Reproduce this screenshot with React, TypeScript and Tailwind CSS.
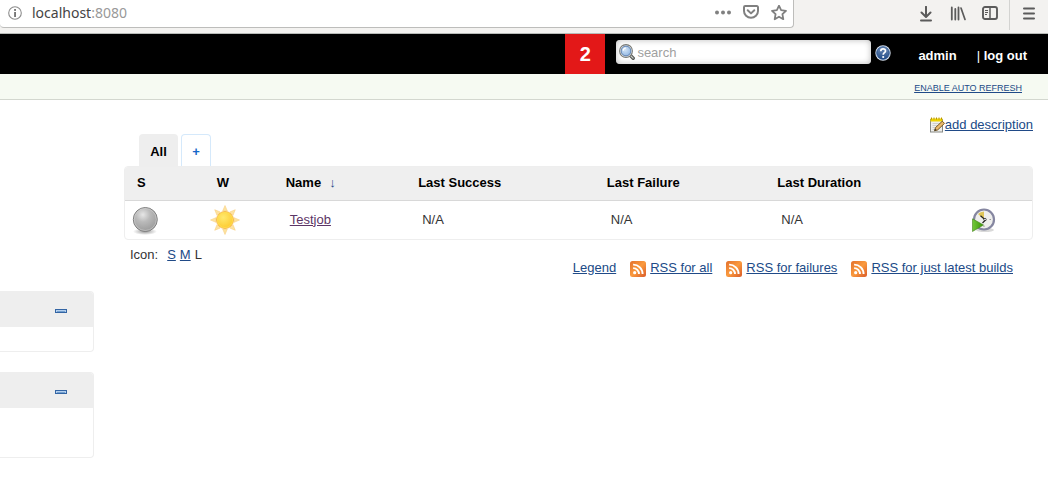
import type { ReactNode } from "react";

const link = "text-[#204a87] underline";

function InfoIcon() {
  return (
    <svg width="14" height="14" viewBox="0 0 14 14" aria-hidden="true">
      <circle cx="7" cy="7" r="6.3" fill="none" stroke="#8c8c8c" strokeWidth="1.1" />
      <rect x="6.1" y="3" width="1.9" height="1.9" fill="#777" />
      <rect x="6.1" y="6" width="1.9" height="5" fill="#777" />
    </svg>
  );
}

function DotsIcon() {
  return (
    <svg width="16" height="16" viewBox="0 0 16 16" fill="#808080" aria-hidden="true">
      <circle cx="2" cy="7.500" r="2" />
      <circle cx="8" cy="7.500" r="2" />
      <circle cx="14" cy="7.500" r="2" />
    </svg>
  );
}

function PocketIcon() {
  return (
    <svg width="16" height="16" viewBox="0 0 16 16" fill="none" stroke="#808080" strokeWidth="2" aria-hidden="true">
      <path d="M2.2 1h11.6a1.2 1.2 0 0 1 1.2 1.2V6a7 6.8 0 0 1-14 0V2.200A1.200 1.200 0 0 1 2.200 1z" />
      <path d="M4.700 5.200 8 8.400l3.300-3.200" strokeLinecap="round" strokeLinejoin="round" />
    </svg>
  );
}

function StarIcon() {
  return (
    <svg width="16" height="16" viewBox="0 0 16 16" fill="none" stroke="#808080" strokeWidth="1.800" strokeLinejoin="round" aria-hidden="true">
      <path d="M8 .7 10.100 5.200 15 5.800 11.400 9.200 12.300 14.200 8 11.700 3.700 14.200 4.600 9.200 1 5.800 5.900 5.200z" />
    </svg>
  );
}

function DownloadIcon() {
  return (
    <svg width="16" height="16" viewBox="0 0 16 16" fill="none" stroke="#5b5b5b" strokeWidth="2" strokeLinecap="round" strokeLinejoin="round" aria-hidden="true">
      <path d="M8 .8v10M3.500 6.500 8 11l4.500-4.500M3 14.500h10" />
    </svg>
  );
}

function LibraryIcon() {
  return (
    <svg width="16" height="16" viewBox="0 0 16 16" fill="none" stroke="#5b5b5b" strokeLinecap="round" aria-hidden="true">
      <path d="M1.800 1.500v12M5.300 3v10.500M8.500 1.500v12" strokeWidth="1.800" />
      <path d="M11 2 15 13.500" strokeWidth="1.700" />
    </svg>
  );
}

function SidebarIcon() {
  return (
    <svg width="16" height="16" viewBox="0 0 16 16" fill="none" stroke="#5b5b5b" aria-hidden="true">
      <rect x="1" y="1" width="14" height="12" rx="2" strokeWidth="1.900" />
      <path d="M8 1v12" strokeWidth="1.500" />
      <path d="M3 4.500h3M3 6.500h3M3 8.500h2" />
    </svg>
  );
}

function MenuIcon() {
  return (
    <svg width="16" height="16" viewBox="0 0 16 16" stroke="#5b5b5b" strokeWidth="2" strokeLinecap="round" aria-hidden="true">
      <path d="M3 2.500h10M3 7.500h10M3 12.500h10" />
    </svg>
  );
}

function MagnifierIcon() {
  return (
    <svg width="16" height="16" viewBox="0 0 16 16" aria-hidden="true">
      <defs>
        <radialGradient id="lens" cx=".4" cy=".35" r=".7">
          <stop offset="0" stopColor="#d5e6f7" />
          <stop offset="1" stopColor="#8fb5e2" />
        </radialGradient>
      </defs>
      <path d="m11 11 3.200 3.200" stroke="#555753" strokeWidth="3.400" strokeLinecap="round" />
      <path d="m11.500 11.500 2.600 2.600" stroke="#c9cbc7" strokeWidth="1.200" strokeLinecap="round" />
      <circle cx="7" cy="7" r="6.400" fill="#f4f4f4" stroke="#777975" strokeWidth="1.100" />
      <circle cx="7" cy="7" r="4.900" fill="url(#lens)" stroke="#5c7fae" />
      <path d="M4.200 6.600A3 3 0 0 1 7 4" stroke="#fff" strokeWidth="1.200" fill="none" />
    </svg>
  );
}

function HelpIcon() {
  return (
    <svg width="16" height="16" viewBox="0 0 16 16" aria-hidden="true">
      <defs>
        <linearGradient id="help" x2="0" y2="1">
          <stop offset="0" stopColor="#7390b8" />
          <stop offset="1" stopColor="#204a87" />
        </linearGradient>
      </defs>
      <circle cx="8" cy="8" r="7.700" fill="#d5e0ee" />
      <circle cx="8" cy="8" r="6.300" fill="url(#help)" stroke="#204a87" strokeWidth=".8" />
      <path d="M5.800 6.200c0-3 4.700-3 4.700-.2C10.500 7.700 8.200 7.700 8.200 9.800" fill="none" stroke="#fff" strokeWidth="1.700" />
      <circle cx="8.200" cy="12" r="1.100" fill="#fff" />
    </svg>
  );
}

function NotepadIcon() {
  return (
    <svg width="15" height="16" viewBox="0 0 15 16" aria-hidden="true">
      <rect x=".5" y="2.500" width="12" height="12.500" fill="#eeeeec" stroke="#888a85" />
      <path d="M2.500 6.500h8M2.500 8.500h7M2.500 10.500h5M2.500 12.500h4" stroke="#cfd0cc" />
      <rect x=".5" y="1.500" width="12" height="3" fill="#edd400" />
      <path d="M1.500 .5v2M4 .5v2M6.500.5v2M9 .5v2M11.500.5v2" stroke="#b89200" />
      <path d="m4.500 13.800 1-3.200 6.800-6.400 2.200 2.200-6.800 6.500z" fill="#e9b96e" stroke="#6b4a13" strokeWidth=".9" />
      <path d="m4.500 13.800.6-2 1.500 1.300z" fill="#2e3436" />
    </svg>
  );
}

function BallIcon() {
  return (
    <svg width="32" height="32" viewBox="0 0 32 32" role="img" aria-label="Not built">
      <defs>
        <radialGradient id="ball" cx=".4" cy=".3" r=".75">
          <stop offset="0" stopColor="#e6e6e6" />
          <stop offset=".4" stopColor="#bababa" />
          <stop offset="1" stopColor="#989898" />
        </radialGradient>
        <radialGradient id="shade">
          <stop offset="0" stopColor="#000" stopOpacity=".4" />
          <stop offset="1" stopColor="#000" stopOpacity="0" />
        </radialGradient>
      </defs>
      <ellipse cx="16" cy="27.500" rx="12" ry="3.500" fill="url(#shade)" />
      <circle cx="16.300" cy="15.500" r="12" fill="url(#ball)" stroke="#808080" />
      <circle cx="16.300" cy="15.500" r="11" fill="none" stroke="#d0d0d0" strokeOpacity=".6" />
    </svg>
  );
}

const rayAngles = [0, 45, 90, 135, 180, 225, 270, 315];

function SunIcon() {
  return (
    <svg width="32" height="32" viewBox="0 0 32 32" role="img" aria-label="Sunny">
      <defs>
        <radialGradient id="sun" cx=".4" cy=".35" r=".7">
          <stop offset="0" stopColor="#ffe96e" />
          <stop offset="1" stopColor="#fdc92b" />
        </radialGradient>
      </defs>
      {rayAngles.map((angle) => (
        <path key={angle} d="M16 1.500 18.300 7h-4.600z" fill="#fde3a0" stroke="#f8d083" strokeWidth=".6" transform={`rotate(${angle} 16 16)`} />
      ))}
      <circle cx="16" cy="16" r="8.500" fill="url(#sun)" stroke="#f5b548" strokeWidth=".9" />
      <circle cx="16" cy="16" r="7.600" fill="none" stroke="#ffdf55" strokeWidth=".7" />
    </svg>
  );
}

function ScheduleIcon() {
  return (
    <svg width="24" height="24" viewBox="0 0 24 24" aria-hidden="true">
      <defs>
        <linearGradient id="play" x2="1">
          <stop offset="0" stopColor="#73c93a" />
          <stop offset="1" stopColor="#3a9408" />
        </linearGradient>
      </defs>
      <ellipse cx="13" cy="22" rx="9" ry="2" fill="#000" fillOpacity=".15" />
      <circle cx="12" cy="11.500" r="10" fill="#eeeeec" stroke="#8586a0" strokeWidth="2.200" />
      <path d="M12 11.500 6 6A8.500 8.500 0 0 1 12 3.500z" fill="#dfc558" />
      <path d="m8.500 7.800 5 4.200-3 3" fill="none" stroke="#222" strokeWidth="1.200" />
      <path d="M19 11.500h-1.500M12 19v-1.500" stroke="#999" />
      <circle cx="13" cy="11.500" r="1.200" fill="#fff" stroke="#222" strokeWidth=".8" />
      <path d="M.5 10.800 11.500 17 .5 23.500z" fill="url(#play)" stroke="#47811f" strokeWidth=".6" />
    </svg>
  );
}

function RssIcon() {
  return (
    <svg width="16" height="16" viewBox="0 0 16 16" aria-hidden="true">
      <defs>
        <linearGradient id="rss" x2="1" y2="1">
          <stop offset="0" stopColor="#e2702d" />
          <stop offset=".5" stopColor="#fa9a3e" />
          <stop offset="1" stopColor="#d95b29" />
        </linearGradient>
      </defs>
      <rect width="16" height="16" rx="2.500" fill="url(#rss)" />
      <circle cx="4.700" cy="11.700" r="1.600" fill="#fff" />
      <path d="M3.100 7.100a5.900 5.900 0 0 1 5.900 6M3.100 3.600a9.400 9.400 0 0 1 9.500 9.500" fill="none" stroke="#fff" strokeWidth="1.900" />
    </svg>
  );
}

function CollapseIcon() {
  return (
    <svg width="12" height="4" viewBox="0 0 12 4" aria-hidden="true">
      <rect width="12" height="4" fill="#3465a4" />
      <rect x="1" y="1" width="10" height="2" fill="#b5d0ee" />
      <rect x="2" y="2" width="8" height="1" fill="#729fcf" />
    </svg>
  );
}

function ToolButton({ label, children }: { label: string; children: ReactNode }) {
  return (
    <button type="button" aria-label={label} className="block shrink-0">
      {children}
    </button>
  );
}

function BrowserBar() {
  return (
    <div className="flex h-[34px] items-start border-b border-[#b8bbb8] bg-[#f3f2f0]">
      <div className="flex h-7 flex-1 items-center rounded-b border-r border-b border-[#bdbdbb] bg-white pr-1.5 pb-px pl-2">
        <ToolButton label="Site information"><InfoIcon /></ToolButton>
        <div className="ml-2.5 flex-1 font-['Noto_Sans',sans-serif] text-sm text-[#444]">
          localhost<span className="text-[#999]">:8080</span>
        </div>
        <div className="flex gap-3">
          <ToolButton label="Page actions"><DotsIcon /></ToolButton>
          <ToolButton label="Save to Pocket"><PocketIcon /></ToolButton>
          <ToolButton label="Bookmark"><StarIcon /></ToolButton>
        </div>
      </div>
      <div className="ml-31 flex h-[27px] items-center gap-4">
        <ToolButton label="Downloads"><DownloadIcon /></ToolButton>
        <ToolButton label="Library"><LibraryIcon /></ToolButton>
        <ToolButton label="Sidebars"><SidebarIcon /></ToolButton>
      </div>
      <div className="ml-[11px] flex h-[30px] items-center border-l border-[#d3d3d1] pr-[11px] pb-[3px] pl-[11px]">
        <ToolButton label="Open menu"><MenuIcon /></ToolButton>
      </div>
    </div>
  );
}

function Header() {
  return (
    <header className="flex h-10 items-start justify-end bg-black pr-[21px] text-white">
      <a href="#notices" className="flex h-10 w-10 items-center justify-center bg-[#e31818] text-xl font-bold">2</a>
      <label className="mt-1.5 ml-[11px] flex h-6 w-[255px] items-center rounded-[4px] bg-white pl-[3px] shadow-[inset_0_0_6px_#bbb]">
        <MagnifierIcon />
        <input type="text" aria-label="Search" placeholder="search" className="ml-0.5 min-w-0 flex-1 bg-transparent pt-0.5 text-[13px] text-[#333] outline-none placeholder:text-[#a0a0a0]" />
      </label>
      <a href="#help" aria-label="Help" className="mt-[11px] ml-1"><HelpIcon /></a>
      <nav className="ml-[27px] flex h-11 items-center gap-5 text-[13px]">
        <a href="#admin" className="font-bold">admin</a>
        <span>| <a href="#logout" className="font-bold">log out</a></span>
      </nav>
    </header>
  );
}

function SidePanel({ label, bodyClass }: { label: string; bodyClass: string }) {
  return (
    <section aria-label={label} className="overflow-hidden rounded-r-[4px] border border-l-0 border-[#eee]">
      <div className="flex h-[35px] items-center justify-end bg-[#eee] pt-0.5 pr-[26px]">
        <button type="button" aria-label="Collapse" className="block"><CollapseIcon /></button>
      </div>
      <div className={bodyClass} />
    </section>
  );
}

const headings = [
  { title: "S", width: "w-[8.8%]" },
  { title: "W", width: "w-[7.6%]" },
  { title: "Name", width: "w-[14.6%]" },
  { title: "Last Success", width: "w-[20.8%]" },
  { title: "Last Failure", width: "w-[18.8%]" },
  { title: "Last Duration", width: "w-[21.5%]" },
];

function JobsTable() {
  return (
    <div className="overflow-hidden rounded-[4px] border border-[#eee]">
      <table className="w-full table-fixed border-collapse text-left">
        <thead>
          <tr className="h-[33px] border-b border-[#d8d8d8] bg-[#efefef] text-black">
            {headings.map(({ title, width }) => (
              <th key={title} scope="col" className={`${width} pl-3 whitespace-nowrap`}>
                {title}
                {title === "Name" && <span className="ml-2 font-normal text-[#204a87]">↓</span>}
              </th>
            ))}
            <th aria-label="Build" />
          </tr>
        </thead>
        <tbody>
          <tr className="h-[39px]">
            <td className="pl-1"><BallIcon /></td>
            <td className="pl-1"><SunIcon /></td>
            <td className="pl-4"><a href="#testjob" className="text-[#5c3566] underline">Testjob</a></td>
            <td className="pl-4">N/A</td>
            <td className="pl-4">N/A</td>
            <td className="pl-4">N/A</td>
            <td className="pl-3">
              <button type="button" aria-label="Schedule a build" className="block"><ScheduleIcon /></button>
            </td>
          </tr>
        </tbody>
      </table>
    </div>
  );
}

const feeds = ["RSS for all", "RSS for failures", "RSS for just latest builds"];

export default function App() {
  return (
    <div className="min-h-screen bg-white font-['Liberation_Sans',Arial,sans-serif] text-[13px] leading-4 text-[#333] [&_svg]:block [&_svg]:shrink-0">
      <BrowserBar />
      <Header />
      <div className="flex h-[26px] items-center justify-end border-b border-[#d3d7cf] bg-[#f6faf2] pr-[26px] pb-px text-[9px] uppercase">
        <a href="#refresh" className={`${link} pt-1`}>Enable auto refresh</a>
      </div>
      <div className="flex">
        <aside className="flex w-[94px] shrink-0 flex-col gap-5 pt-[191px]">
          <SidePanel label="Build queue" bodyClass="h-6" />
          <SidePanel label="Build executors" bodyClass="h-[49px]" />
        </aside>
        <main className="min-w-0 flex-1 pt-[17px] pr-[15px] pl-[30px]">
          <div className="flex justify-end">
            <a href="#description" className={`${link} flex`}><NotepadIcon />add description</a>
          </div>
          <div className="mt-px flex gap-[3px] pl-[15px] font-bold">
            <a href="#all" className="flex h-8 w-[39px] items-center justify-center rounded-t-[4px] bg-[#eee] pt-1 text-black">All</a>
            <a href="#new" aria-label="New view" className="flex h-8 w-[30px] items-center justify-center rounded-t-[4px] border border-b-0 border-[#d5e9fb] pt-0.5 text-[#1467c8]">+</a>
          </div>
          <JobsTable />
          <div className="flex gap-1 pt-[7px] pl-1.5">
            <span className="mr-[5px]">Icon:</span>
            <a href="#small" className={link}>S</a>
            <a href="#medium" className={link}>M</a>
            <span>L</span>
          </div>
          <div className="flex items-start justify-end gap-3.5 pr-5">
            <a href="#legend" className={`${link} -mt-[3px]`}>Legend</a>
            {feeds.map((feed) => (
              <a key={feed} href="#rss" className={`${link} -mt-[3px] flex items-start gap-1`}>
                <span className="pt-px"><RssIcon /></span>{feed}
              </a>
            ))}
          </div>
        </main>
      </div>
    </div>
  );
}
